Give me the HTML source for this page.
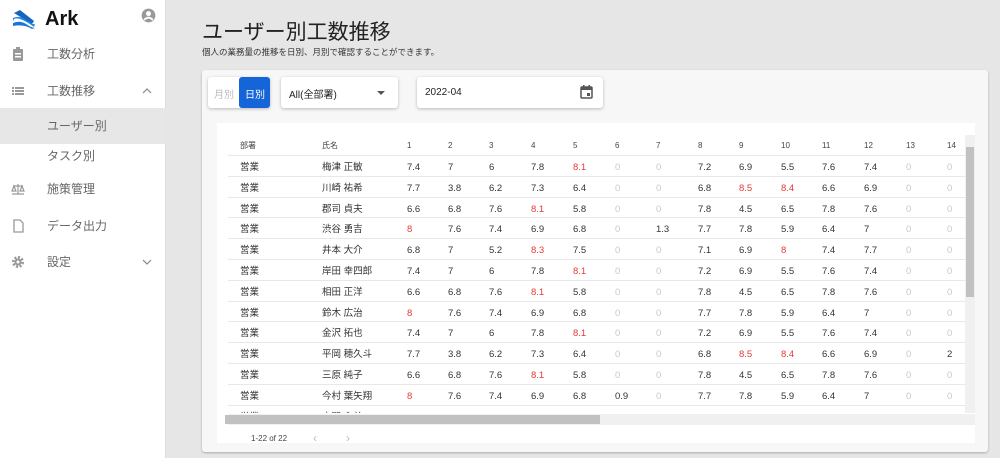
<!DOCTYPE html>
<html><head><meta charset="utf-8"><style>
*{margin:0;padding:0;box-sizing:border-box}
body{width:1000px;height:458px;overflow:hidden;background:#e6e6e6;font-family:"Liberation Sans","Noto Sans CJK JP",sans-serif;position:relative;color:#333}
.side{position:absolute;left:0;top:0;width:166px;height:458px;background:#fff;border-right:1px solid #ddd}
.nav{position:absolute;left:0;width:166px;height:36px;font-size:12px;color:#666;line-height:36px}
.nav span{position:absolute;left:47px}
.ic{position:absolute;left:11px;top:11px;width:14px;height:14px}
.chev{position:absolute;left:142px;top:14px}
.a{position:absolute}
.card{position:absolute;left:202px;top:70px;width:786px;height:382px;background:#f7f7f7;border-radius:3px;box-shadow:0 1px 2px rgba(0,0,0,.25)}
.btn{position:absolute;background:#fff;border-radius:3px;box-shadow:0 1px 3px rgba(0,0,0,.25)}
.tbl{position:absolute;left:217px;top:123px;width:758px;height:320px;background:#fff}
.c{position:absolute;font-size:9.5px;white-space:nowrap;line-height:12px;height:12px}
.r{color:#e53935}.z{color:#c8c8c8}
.line{position:absolute;left:228px;width:737px;height:1px;background:#e8e8e8}
</style></head><body>
<div class="side">
 <svg class="a" style="left:12px;top:9px" width="24" height="20" viewBox="0 0 24 20"><path d="M2 4 L8 1 L22 12 L20 15Z" fill="#1565c0"/><path d="M1 9 Q8 6 14 11 T23 15 L22 18 Q14 12 8 10 T1 12Z" fill="#1e88e5"/><path d="M1 14 Q8 11 14 15 T23 19 L20 20 Q12 15 1 17Z" fill="#1976d2"/></svg>
 <div class="a" style="left:45px;top:8px;font-size:20px;font-weight:bold;color:#111">Ark</div>
 <svg class="a" style="left:141px;top:8px" width="15" height="15" viewBox="0 0 24 24"><circle cx="12" cy="12" r="11" fill="#999"/><circle cx="12" cy="9" r="4" fill="#fff"/><path d="M5 19 Q12 12 19 19" stroke="#fff" stroke-width="3" fill="none"/></svg>
 <div class="nav" style="top:36px"><svg class="ic" viewBox="0 0 14 14"><rect x="2" y="2" width="10" height="12" rx="1" fill="#999"/><rect x="5" y="0" width="4" height="3" fill="#999"/><rect x="4" y="6" width="6" height="1.5" fill="#fff"/><rect x="4" y="9" width="6" height="1.5" fill="#fff"/></svg><span>工数分析</span></div>
 <div class="nav" style="top:73px"><svg class="ic" viewBox="0 0 14 14"><g fill="#999"><rect x="1" y="3" width="2" height="2"/><rect x="4" y="3" width="9" height="2"/><rect x="1" y="6" width="2" height="2"/><rect x="4" y="6" width="9" height="2"/><rect x="1" y="9" width="2" height="2"/><rect x="4" y="9" width="9" height="2"/></g></svg><span>工数推移</span><svg class="chev" width="10" height="8" viewBox="0 0 10 8"><path d="M1 6L5 2L9 6" stroke="#888" fill="none" stroke-width="1.2"/></svg></div>
 <div class="nav" style="top:108px;background:#e7e7e7"><span>ユーザー別</span></div>
 <div class="nav" style="top:138px"><span>タスク別</span></div>
 <div class="nav" style="top:171px"><svg class="ic" viewBox="0 0 14 14"><g stroke="#999" fill="none" stroke-width="1.2"><path d="M7 2V12M2 4H12M1 12H13M3 4L1 9H5ZM11 4L9 9H13Z"/></g></svg><span>施策管理</span></div>
 <div class="nav" style="top:208px"><svg class="ic" viewBox="0 0 14 14"><path d="M3 1H9L12 4V13H3Z" stroke="#999" stroke-width="1.3" fill="none"/></svg><span>データ出力</span></div>
 <div class="nav" style="top:244px"><svg class="ic" viewBox="0 0 14 14"><circle cx="7" cy="7" r="4.5" fill="none" stroke="#999" stroke-width="3" stroke-dasharray="2 1.5"/><circle cx="7" cy="7" r="3.5" fill="#999"/><circle cx="7" cy="7" r="1.5" fill="#fff"/></svg><span>設定</span><svg class="chev" width="10" height="8" viewBox="0 0 10 8"><path d="M1 2L5 6L9 2" stroke="#888" fill="none" stroke-width="1.2"/></svg></div>
</div>
<div class="a" style="left:202px;top:16px;font-size:21px;color:#222">ユーザー別工数推移</div>
<div class="a" style="left:202px;top:46px;font-size:8.5px;color:#333">個人の業務量の推移を日別、月別で確認することができます。</div>
<div class="card"></div>
<div class="btn" style="left:208px;top:77px;width:62px;height:31px"></div>
<div class="a" style="left:239px;top:77px;width:31px;height:31px;background:#1565d8;border-radius:3px"></div>
<div class="a" style="left:214px;top:86px;font-size:10px;color:#bbb">月別</div>
<div class="a" style="left:245px;top:86px;font-size:10px;color:#fff">日別</div>
<div class="btn" style="left:281px;top:77px;width:117px;height:31px"></div>
<div class="a" style="left:289px;top:86px;font-size:10px;color:#222">All(全部署)</div>
<div class="a" style="left:377px;top:91px;border:4px solid transparent;border-top:4px solid #555;border-bottom:0"></div>
<div class="btn" style="left:417px;top:77px;width:186px;height:31px"></div>
<div class="a" style="left:425px;top:87px;font-size:10px;color:#222">2022-04</div>
<svg class="a" style="left:580px;top:85px" width="13" height="14" viewBox="0 0 13 14"><rect x="1" y="2" width="11" height="11" rx="1" fill="none" stroke="#555" stroke-width="1.5"/><rect x="1" y="2" width="11" height="3" fill="#555"/><rect x="3" y="0" width="1.5" height="3" fill="#555"/><rect x="8.5" y="0" width="1.5" height="3" fill="#555"/><rect x="7" y="8" width="3" height="3" fill="#555"/></svg>
<div class="tbl"></div>
<div id="t" class="a" style="left:0;top:135px;width:965px;height:278px;overflow:hidden"></div>
<div class="a" style="left:965px;top:135px;width:10px;height:278px;background:#f0f0f0"></div>
<div class="a" style="left:966px;top:147px;width:8px;height:150px;background:#c1c1c1"></div>
<div class="a" style="left:228px;top:414px;width:737px;height:11px;background:#f0f0f0"></div>
<div class="a" style="left:225px;top:415px;width:375px;height:9px;background:#c1c1c1"></div>
<div class="a" style="left:965px;top:414px;width:10px;height:11px;background:#f0f0f0"></div>
<div class="a" style="left:251px;top:434px;font-size:8px;color:#444">1-22 of 22</div>
<div class="a" style="left:313px;top:431px;font-size:12px;color:#bbb">‹</div>
<div class="a" style="left:346px;top:431px;font-size:12px;color:#bbb">›</div>
<script>
var X=[240,322,407,448,489,531,573,615,656,698,739,781,822,864,906,947];
var h='';
var hd=['部署','氏名'];for(var i=1;i<=14;i++)hd.push(''+i);
hd.forEach(function(t,i){h+='<div class="c" style="left:'+X[i]+'px;top:5px;font-size:8px;color:#444">'+t+'</div>';});
var A="7.4 7 6 7.8 8.1r 0 0 7.2 6.9 5.5 7.6 7.4 0 0",B="7.7 3.8 6.2 7.3 6.4 0 0 6.8 8.5r 8.4r 6.6 6.9 0 0",C="6.6 6.8 7.6 8.1r 5.8 0 0 7.8 4.5 6.5 7.8 7.6 0 0",D="8r 7.6 7.4 6.9 6.8 0 1.3 7.7 7.8 5.9 6.4 7 0 0",E="6.8 7 5.2 8.3r 7.5 0 0 7.1 6.9 8r 7.4 7.7 0 0";
var R=[['梅津 正敏',A],['川崎 祐希',B],['郡司 貞夫',C],['渋谷 勇吉',D],['井本 大介',E],['岸田 幸四郎',A],['相田 正洋',C],['鈴木 広治',D.replace('1.3','0')],['金沢 拓也',A],['平岡 穂久斗',B.replace(/0 0$/,'0 2')],['三原 純子',C],['今村 葉矢翔',D.replace('6.8 0 1.3','6.8 0.9 0')],['木間 心美',E]];
R.forEach(function(r,k){var y=20+k*20.8;h+='<div class="line" style="top:'+(y)+'px"></div>';
 var vals=['営業',r[0]].concat(r[1].split(' '));
 vals.forEach(function(v,i){var cl='';if(v.slice(-1)=='r'){cl='r';v=v.slice(0,-1)}else if(v=='0')cl='z';
 h+='<div class="c '+cl+'" style="left:'+X[i]+'px;top:'+(y+7)+'px">'+v+'</div>';});});
document.getElementById('t').innerHTML=h;
</script>
</body></html>
